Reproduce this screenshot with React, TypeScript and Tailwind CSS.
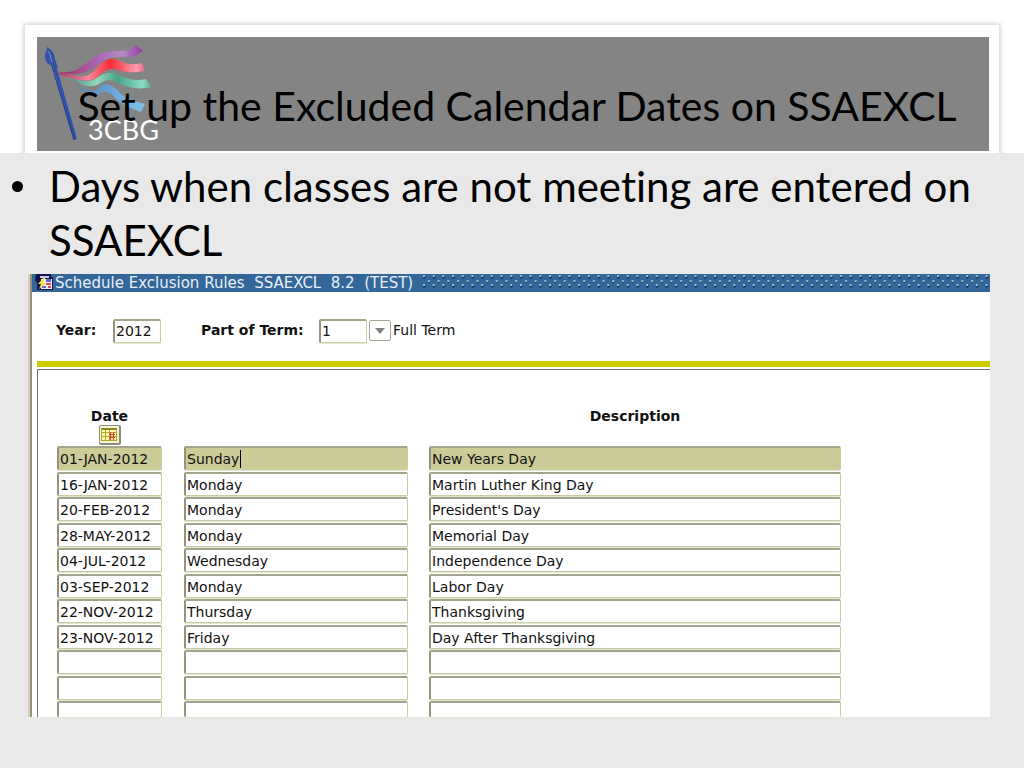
import React from 'react';

type ExclusionRow = {
  date: string;
  day: string;
  description: string;
};

const rows: ExclusionRow[] = [
  { date: '01-JAN-2012', day: 'Sunday', description: 'New Years Day' },
  { date: '16-JAN-2012', day: 'Monday', description: 'Martin Luther King Day' },
  { date: '20-FEB-2012', day: 'Monday', description: "President's Day" },
  { date: '28-MAY-2012', day: 'Monday', description: 'Memorial Day' },
  { date: '04-JUL-2012', day: 'Wednesday', description: 'Independence Day' },
  { date: '03-SEP-2012', day: 'Monday', description: 'Labor Day' },
  { date: '22-NOV-2012', day: 'Thursday', description: 'Thanksgiving' },
  { date: '23-NOV-2012', day: 'Friday', description: 'Day After Thanksgiving' },
  { date: '', day: '', description: '' },
  { date: '', day: '', description: '' },
  { date: '', day: '', description: '' },
];

const Logo = () => (
  <svg className="absolute left-1 top-1 h-28 w-32" viewBox="41 42 128 112" aria-hidden="true">
    <defs>
      <linearGradient id="purple">
        <stop offset="0" stopColor="#a0306c" />
        <stop offset="0.55" stopColor="#b070c0" />
        <stop offset="0.75" stopColor="#b58ac4" />
        <stop offset="1" stopColor="#93399f" />
      </linearGradient>
      <linearGradient id="red">
        <stop offset="0" stopColor="#c02860" />
        <stop offset="0.35" stopColor="#f4889c" />
        <stop offset="0.6" stopColor="#f62c34" />
        <stop offset="0.9" stopColor="#ff9cb0" />
        <stop offset="1" stopColor="#e86a80" />
      </linearGradient>
      <linearGradient id="green">
        <stop offset="0" stopColor="#508c80" />
        <stop offset="0.35" stopColor="#92d8bc" />
        <stop offset="0.6" stopColor="#48a488" />
        <stop offset="0.9" stopColor="#8cdcc4" />
        <stop offset="1" stopColor="#58ac98" />
      </linearGradient>
      <linearGradient id="blue">
        <stop offset="0" stopColor="#5c84a4" />
        <stop offset="0.5" stopColor="#68a4dc" />
        <stop offset="1" stopColor="#80c4e8" />
      </linearGradient>
    </defs>
    <path d="M76 84 C84 91 93 95 99 89 C105 82 112 86 119 93 C127 101 135 102 145 105 L141 113 C131 110 123 106 117 101 C109 91 103 91 99 95 C90 101 82 93 76 84Z" fill="url(#blue)" />
    <path d="M68 76 C79 83 89 84 97 79 C106 72 113 73 121 77 C129 81 138 82 146 80 L151 88 C140 91 128 89 119 84 C109 78 104 82 97 86 C87 90 78 84 68 76Z" fill="url(#green)" />
    <path d="M58 74 C72 76 84 81 93 73 C101 64 108 57 118 61 C127 66 134 66 142 64 L145 72 C134 74 124 74 116 70 C106 68 101 75 95 80 C84 84 72 79 58 75Z" fill="url(#red)" />
    <path d="M60 73 C75 75 84 66 93 59 C103 50 117 53 129 51 L136 46 L143 52 L133 58 C121 59 111 56 103 62 C90 72 82 78 60 74Z" fill="url(#purple)" />
    <path d="M52 64 L74 141 L77 140 L55 63Z" fill="#2b50b0" />
    <path d="M51 64 L74 141" stroke="#20387e" />
    <path d="M47 48 C52 51 55 55 55 60 L58 69 L52 67 C46 64 46 62 45 59 C44 55 47 53 47 48Z" fill="#3452a4" />
    <path d="M48 52 C51 55 50 59 52 63" stroke="#6c92d8" fill="none" />
    <text x="88" y="141" fontFamily="Lato, sans-serif" fontSize="27" fill="#fff">3CBG</text>
  </svg>
);

const FormIcon = () => (
  <svg className="h-[18px] w-[23px] shrink-0" viewBox="0 0 23 18" aria-hidden="true">
    <path d="M1 0H6V7L3 5Z" fill="#2c7850" />
    <path d="M4 0H19V3H21V16H5V9L3 6Z" fill="#141450" />
    <path d="M8 2h9v2h-9z" fill="#c8c8e4" />
    <rect x="9" y="5" width="11" height="10" fill="#f0ecf8" />
    <path d="M14 5h5v3h-5z M10 12h4v2h-4z" fill="#6068c0" />
    <path d="M14 9h5v2h-5z M16 12h3v2h-3z" fill="#e04858" />
    <path d="M11 4L6 10H9L7 15L14 9H11L13 4Z" fill="#f2e640" />
  </svg>
);

const CalendarIcon = () => (
  <svg className="h-[13px] w-4" viewBox="0 0 16 13" aria-hidden="true">
    <rect width="16" height="13" fill="#fbf6b8" />
    <path d="M0 0h16v2H0z" fill="#8c8818" />
    <path d="M0 4.5H16 M0 8.5H16 M0 12.5H16 M0.5 1V13 M4.5 2V13 M8.5 2V13 M15.5 1V13" stroke="#b4a820" fill="none" />
    <path d="M9.5 4v8 M12.5 4v8 M8 6.5h6 M8 9.5h6" stroke="#dc4028" />
  </svg>
);

const DotStrip = () => (
  <svg className="ml-2 h-[18px] min-w-0 flex-1" aria-hidden="true">
    <defs>
      <pattern id="dots" width="9.7" height="18" patternUnits="userSpaceOnUse">
        <path d="M4 2l1 1l-2 2l-1-1z M9 7l1 0l-2 2l-1-1z M4 11l1 1l-2 2l-1-1z" fill="#0c2c4c" />
        <path d="M2 1h2v2h-2z M7 6h2v2h-2z M2 10h2v2h-2z" fill="#98c4cc" />
      </pattern>
    </defs>
    <rect width="100%" height="18" fill="url(#dots)" />
  </svg>
);

const fieldBase =
  'block w-full rounded-[2px] border-t-2 border-l-2 border-r border-b border-t-[#a4a48c] border-l-[#94947c] border-r-[#c9cba0] border-b-[#c9cba0] shadow-[0_1px_0_#e4e6d0] outline-none';

const rowHeight = (index: number) => {
  if (index === rows.length - 1) return 'h-4';
  return index % 2 === 0 ? 'h-[26px]' : 'h-[25px]';
};

const App: React.FC = () => {
  return (
    <main className="min-h-screen bg-[#e9e9e9] text-black">
      {/* Banner */}
      <header className="h-[153px] overflow-hidden bg-white px-6 pt-6">
        <div className="h-36 border border-[#e2e2e2] bg-white pt-3 pr-[10px] pl-3 shadow-[0_0_4px_rgba(0,0,0,0.25)]">
          <div className="relative flex h-[114px] items-center justify-center bg-[#848484] pt-6 pl-2">
            <Logo />
            <h1 className="relative whitespace-nowrap font-[Lato,sans-serif] text-[41px] leading-[54px]">
              Set up the Excluded Calendar Dates on SSAEXCL
            </h1>
          </div>
        </div>
      </header>

      {/* Bullet */}
      <ul className="pt-[6px] pl-3 font-[Lato,sans-serif] text-[42px] leading-[54px] [font-variant-ligatures:none]">
        <li className="flex gap-[26px]">
          <span className="mt-[22px] h-[11px] w-[11px] shrink-0 rounded-full bg-black" />
          <span>Days when classes are not meeting are entered on SSAEXCL</span>
        </li>
      </ul>

      {/* Schedule form */}
      <section className="mt-[7px] mr-[34px] ml-7 border-l-2 border-[#d6d0c4] bg-white font-['DejaVu_Sans',sans-serif] text-[14px] text-[#111]">
        <div className="border-l-2 border-[#98927c]">
          <div className="flex h-[18px] items-center overflow-hidden bg-[#336699] text-[#e8f0f8]">
            <FormIcon />
            <h2 className="whitespace-pre text-[15px] leading-4">Schedule Exclusion Rules  SSAEXCL  8.2  (TEST)</h2>
            <DotStrip />
          </div>

          <form className="flex h-[69px] items-center pt-2 pl-6">
            <label htmlFor="year" className="w-[57px] shrink-0 font-bold">Year:</label>
            <input id="year" defaultValue="2012" className={`${fieldBase} h-6 max-w-12 bg-white px-px`} />
            <label htmlFor="term" className="ml-10 w-[118px] shrink-0 font-bold">Part of Term:</label>
            <input id="term" defaultValue="1" className={`${fieldBase} h-6 max-w-12 bg-white px-px`} />
            <button
              type="button"
              aria-label="Choose part of term"
              className="ml-[2px] flex h-[21px] w-[22px] shrink-0 items-center justify-center rounded-[2px] border border-[#a4a494]"
            >
              <svg className="h-[6px] w-[10px]" viewBox="0 0 10 6">
                <path d="M0 0H10L5 6Z" fill="#808080" />
              </svg>
            </button>
            <span className="ml-[2px] whitespace-nowrap">Full Term</span>
          </form>

          <div className="ml-[5px] h-[6px] bg-[#cccc00]" />

          <div className="mt-[2px] ml-[5px] border-t border-l border-[#707070] pt-[38px] pl-[19px]">
            <table className="border-collapse">
              <thead>
                <tr className="leading-4">
                  <th className="h-[38px] w-[127px] pr-[22px] align-top">
                    Date
                    <button
                      type="button"
                      aria-label="Open calendar"
                      className="mx-auto mt-px flex h-5 w-[22px] items-center justify-center rounded-[2px] border border-r-2 border-b-2 border-[#8c8c74] bg-[#f4f4dc]"
                    >
                      <CalendarIcon />
                    </button>
                  </th>
                  <th className="w-[245px]" aria-label="Day" />
                  <th className="w-[412px] align-top">Description</th>
                </tr>
              </thead>
              <tbody>
                {rows.map((row, index) => {
                  const tone = index === 0 ? 'bg-[#cccc99]' : 'bg-white';
                  const size = index === rows.length - 1 ? 'h-4 border-b-0' : 'h-6';
                  const field = `${fieldBase} ${tone} ${size} px-px`;
                  return (
                    <tr key={index} className={`align-top ${rowHeight(index)}`}>
                      <td className="pr-[22px]">
                        <input aria-label="Date" defaultValue={row.date} className={field} />
                      </td>
                      <td className="pr-[21px]">
                        {index === 0 ? (
                          <div className="relative">
                            <input aria-label="Day" defaultValue={row.day} className={field} />
                            <span className="absolute top-1 left-14 h-[18px] w-px bg-black" />
                          </div>
                        ) : (
                          <input aria-label="Day" defaultValue={row.day} className={field} />
                        )}
                      </td>
                      <td>
                        <input aria-label="Description" defaultValue={row.description} className={field} />
                      </td>
                    </tr>
                  );
                })}
              </tbody>
            </table>
          </div>
        </div>
      </section>
    </main>
  );
};

export default App;
